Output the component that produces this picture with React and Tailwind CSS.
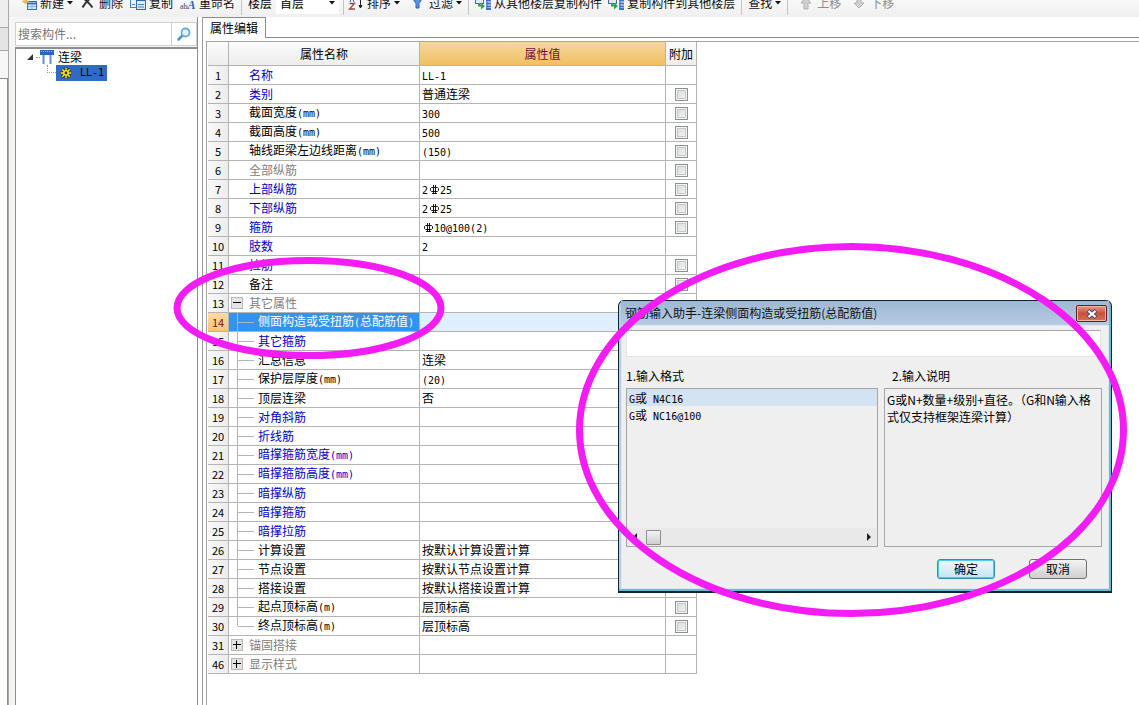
import { Fragment } from 'react'
import { clsx } from 'clsx'

const rows = [
  { no: 1, name: '名称', value: 'LL-1', tone: 'blue' },
  { no: 2, name: '类别', value: '普通连梁', tone: 'blue', check: true },
  { no: 3, name: '截面宽度(mm)', value: '300', check: true },
  { no: 4, name: '截面高度(mm)', value: '500', check: true },
  { no: 5, name: '轴线距梁左边线距离(mm)', value: '(150)', check: true },
  { no: 6, name: '全部纵筋', value: '', tone: 'gray', check: true },
  { no: 7, name: '上部纵筋', value: '2Φ25', tone: 'blue', check: true },
  { no: 8, name: '下部纵筋', value: '2Φ25', tone: 'blue', check: true },
  { no: 9, name: '箍筋', value: 'Φ10@100(2)', tone: 'blue', check: true },
  { no: 10, name: '肢数', value: '2', tone: 'blue' },
  { no: 11, name: '拉筋', value: '', tone: 'blue', check: true },
  { no: 12, name: '备注', value: '', check: true },
  { no: 13, name: '其它属性', value: '', tone: 'gray', node: 'open' },
  { no: 14, name: '侧面构造或受扭筋(总配筋值)', value: '', tone: 'white', node: 'child', check: true, selected: true },
  { no: 15, name: '其它箍筋', value: '', tone: 'blue', node: 'child' },
  { no: 16, name: '汇总信息', value: '连梁', node: 'child', check: true },
  { no: 17, name: '保护层厚度(mm)', value: '(20)', node: 'child', check: true },
  { no: 18, name: '顶层连梁', value: '否', node: 'child', check: true },
  { no: 19, name: '对角斜筋', value: '', tone: 'blue', node: 'child', check: true },
  { no: 20, name: '折线筋', value: '', tone: 'blue', node: 'child', check: true },
  { no: 21, name: '暗撑箍筋宽度(mm)', value: '', tone: 'blue', node: 'child', check: true },
  { no: 22, name: '暗撑箍筋高度(mm)', value: '', tone: 'blue', node: 'child', check: true },
  { no: 23, name: '暗撑纵筋', value: '', tone: 'blue', node: 'child', check: true },
  { no: 24, name: '暗撑箍筋', value: '', tone: 'blue', node: 'child', check: true },
  { no: 25, name: '暗撑拉筋', value: '', tone: 'blue', node: 'child', check: true },
  { no: 26, name: '计算设置', value: '按默认计算设置计算', node: 'child' },
  { no: 27, name: '节点设置', value: '按默认节点设置计算', node: 'child' },
  { no: 28, name: '搭接设置', value: '按默认搭接设置计算', node: 'child' },
  { no: 29, name: '起点顶标高(m)', value: '层顶标高', node: 'child', check: true },
  { no: 30, name: '终点顶标高(m)', value: '层顶标高', node: 'last', check: true },
  { no: 31, name: '锚固搭接', value: '', tone: 'gray', node: 'closed' },
  { no: 46, name: '显示样式', value: '', tone: 'gray', node: 'closed' },
]

const toneClass = {
  blue: 'text-[#0000c8]',
  gray: 'text-[#808080]',
  white: 'text-white',
}

// Latin runs use a half-width face, Φ is the rebar grade sign
function MixedText({ text }) {
  return text.split(/(Φ|[\x20-\x7e]+)/).map((part, i) => {
    if (part === 'Φ') return <RebarSign key={i} />
    if (/^[\x20-\x7e]+$/.test(part)) {
      return (
        <span key={i} className="font-['DejaVu_Sans_Mono',monospace] text-[10px] whitespace-pre">
          {part}
        </span>
      )
    }
    return <Fragment key={i}>{part}</Fragment>
  })
}

function TreeMark({ node }) {
  if (node === 'child' || node === 'last') {
    return (
      <span className="flex items-center self-stretch pr-1 pl-2" aria-hidden="true">
        <span
          className={clsx(
            'w-px bg-[#b4b4b4]',
            node === 'last' ? 'h-[9px] self-start' : 'self-stretch',
          )}
        />
        <span className="h-px w-4 bg-[#b4b4b4]" />
      </span>
    )
  }
  if (node) {
    const open = node === 'open'
    return (
      <button
        type="button"
        aria-label={open ? '折叠' : '展开'}
        className="mr-1.5 ml-0.5 flex size-3 items-center justify-center border border-[#b8b8b8] bg-[#e4e4e4] text-black"
      >
        <svg viewBox="0 0 8 8" className="size-2 shrink-0" aria-hidden="true">
          <rect x="0" y="3" width="8" height="1" fill="currentColor" />
          {!open && <rect x="3" y="0" width="1" height="8" fill="currentColor" />}
        </svg>
      </button>
    )
  }
  return <span className="w-5" />
}

function PropertyRow({ row }) {
  return (
    <tr className="h-[19px]">
      <th
        scope="row"
        className={clsx(
          'border-r border-b border-[#b4b4b4] p-0 text-center text-[11px] leading-[18px] font-normal',
          row.selected
            ? 'bg-linear-to-b from-[#fbdba3] to-[#f8c377] text-[#7a1010]'
            : 'bg-linear-to-r from-[#f9f9f9] to-[#ececec] text-black',
        )}
      >
        {row.no}
      </th>
      <td className={clsx('border-r border-b border-[#b4b4b4] p-0', row.selected && 'bg-[#3393ee]')}>
        <div className={clsx('flex h-[18px] items-center', toneClass[row.tone])}>
          <TreeMark node={row.node} />
          <span className="leading-[18px] whitespace-nowrap">
            <MixedText text={row.name} />
          </span>
        </div>
      </td>
      <td className={clsx('border-r border-b border-[#b4b4b4] p-0', row.selected && 'bg-[#e0efff]')}>
        <div className="h-[18px] pl-0.5 leading-[18px] whitespace-nowrap">
          <MixedText text={row.value} />
        </div>
      </td>
      <td className="border-r border-b border-[#b4b4b4] p-0">
        <div className="flex h-[18px] items-center justify-center">
          {row.check && (
            <input
              type="checkbox"
              aria-label={`附加 ${row.name}`}
              className="size-[13px] appearance-none border border-[#8e8f8f] bg-linear-to-br from-[#d4d6d9] to-[#f8f8f8] shadow-[inset_0_0_0_1px_#f4f4f4,inset_0_0_0_2px_#c4c7ca]"
            />
          )}
        </div>
      </td>
    </tr>
  )
}

function ToolButton({ icon, label, caret, disabled }) {
  return (
    <button
      type="button"
      disabled={disabled}
      className={clsx(
        'flex shrink-0 items-center gap-[3px] whitespace-nowrap',
        disabled ? 'text-[#8c8c8c]' : 'text-[#111111]',
      )}
    >
      {icon}
      {label}
      {caret && <Caret />}
    </button>
  )
}

function Separator({ wide }) {
  return <span className={clsx('h-6 w-px shrink-0 bg-[#c4c4c4]', wide ? 'mx-1.5' : 'mx-1')} />
}

function Toolbar() {
  return (
    <header className="flex h-[17px] flex-col justify-end overflow-hidden bg-linear-to-b from-[#f8f8f8] to-[#efefef]">
      <div className="flex h-7 shrink-0 items-center pl-3">
        <div className="flex gap-[7px]">
          <ToolButton icon={<NewIcon />} label="新建" caret />
          <ToolButton icon={<DeleteIcon />} label="删除" />
          <ToolButton icon={<CopyIcon />} label="复制" />
          <ToolButton icon={<RenameIcon />} label="重命名" />
        </div>
        <Separator wide />
        <label htmlFor="floor" className="mr-1 shrink-0">
          楼层
        </label>
        <div className="flex h-[22px] w-[63px] shrink-0 items-center bg-white pr-1">
          <select id="floor" className="min-w-0 flex-1 appearance-none bg-transparent pl-1 text-black">
            <option>首层</option>
          </select>
          <Caret />
        </div>
        <Separator />
        <div className="flex gap-2.5">
          <ToolButton icon={<SortIcon />} label="排序" caret />
          <ToolButton icon={<FilterIcon />} label="过滤" caret />
        </div>
        <Separator wide />
        <div className="flex gap-1.5">
          <ToolButton icon={<FloorCopyIcon />} label="从其他楼层复制构件" />
          <ToolButton icon={<FloorCopyIcon />} label="复制构件到其他楼层" />
        </div>
        <Separator wide />
        <ToolButton label="查找" caret />
        <Separator wide />
        <div className="flex gap-2.5 pl-1">
          <ToolButton icon={<ArrowIcon />} label="上移" disabled />
          <ToolButton icon={<ArrowIcon down />} label="下移" disabled />
        </div>
      </div>
    </header>
  )
}

function ComponentTree() {
  return (
    <aside className="ml-1.5 flex w-[183px] shrink-0 flex-col border-r border-[#8c8c94] pt-[5px]">
      <form className="flex h-[24px] border border-[#cfcfcf] bg-white">
        <input
          type="text"
          aria-label="搜索构件"
          placeholder="搜索构件..."
          className="min-w-0 flex-1 border-r border-[#cfcfcf] pl-0.5 placeholder:text-[#777777]"
        />
        <button type="button" aria-label="搜索" className="flex w-6 items-center justify-center">
          <SearchIcon />
        </button>
      </form>
      <div className="mt-px flex-1 border-t-2 border-l border-[#8c8c94] bg-white">
        <ul>
          <li>
            <div className="flex h-4 items-center pl-2.5">
              <svg viewBox="0 0 8 8" className="size-2" aria-hidden="true">
                <path d="M7 1v6H1z" fill="#333333" />
              </svg>
              <span className="ml-0.5 w-1 border-t border-dotted border-[#999999]" />
              <BeamIcon />
              <span className="ml-1 leading-4">连梁</span>
            </div>
            <ul>
              <li className="flex h-4 items-center pl-[31px]">
                <span className="h-2 w-[9px] self-start border-b border-l border-dotted border-[#999999]" />
                <a href="#ll-1" className="flex h-4 w-[51px] items-center gap-1 bg-[#316ac5] pl-1 text-black">
                  <GearIcon />
                  <MixedText text="LL-1" />
                </a>
              </li>
            </ul>
          </li>
        </ul>
      </div>
    </aside>
  )
}

function PropertyEditor() {
  return (
    <main className="ml-1 flex min-w-0 flex-1 flex-col border-l border-[#9a9aa2]">
      <div className="flex h-[21px]" role="tablist">
        <button
          type="button"
          role="tab"
          aria-selected="true"
          className="w-[63px] border-t border-r border-[#8c8c94] bg-white"
        >
          属性编辑
        </button>
        <div className="flex-1 border-b border-[#8c8c94]" />
      </div>
      <div className="mt-[3px] ml-[3px] flex-1 border-t border-l border-[#a6a6a6] bg-white">
        <table className="ml-px w-[489px] table-fixed border-separate border-spacing-0">
          <colgroup>
            <col className="w-[21px]" />
            <col className="w-[191px]" />
            <col className="w-[246px]" />
            <col className="w-[31px]" />
          </colgroup>
          <thead>
            <tr className="h-6">
              <th className="border-r border-b border-[#b4b4b4] bg-linear-to-b from-[#fbfbfb] to-[#ededed] p-0" />
              <th className="border-r border-b border-[#b4b4b4] bg-linear-to-b from-[#fbfbfb] to-[#ededed] p-0 font-normal">
                属性名称
              </th>
              <th className="border-r border-b border-[#b4b4b4] bg-linear-to-b from-[#f7d79b] to-[#f0bf62] p-0 font-normal text-[#70103c]">
                属性值
              </th>
              <th className="border-r border-b border-[#b4b4b4] bg-linear-to-b from-[#fbfbfb] to-[#ededed] p-0 font-normal">
                附加
              </th>
            </tr>
          </thead>
          <tbody>
            {rows.map((row) => (
              <PropertyRow key={row.no} row={row} />
            ))}
          </tbody>
        </table>
      </div>
    </main>
  )
}

function InputHelperDialog() {
  return (
    <section
      role="dialog"
      aria-labelledby="helper-title"
      className="absolute top-[300px] left-[618px] w-[494px] rounded-t-md border border-b-2 border-[#0d2433] bg-[#b7d0e8] px-0.5 pb-0.5 shadow-[inset_-2px_-2px_0_#6fb8d2]"
    >
      <header className="flex h-6 items-start justify-between bg-linear-to-b from-[#9fb8d2] to-[#b4cbe3] pr-0.5 pl-1">
        <h2 id="helper-title" className="text-xs leading-6 text-[#111111]">
          钢筋输入助手-连梁侧面构造或受扭筋(总配筋值)
        </h2>
        <button
          type="button"
          aria-label="关闭"
          className="mt-1 flex h-[17px] w-[31px] items-center justify-center rounded-[2px] border border-[#5b2020] bg-linear-to-b from-[#e39a8b] via-[#c8503c] to-[#d4705a] shadow-[inset_0_0_0_1px_#eeb8a8]"
        >
          <svg viewBox="0 0 12 10" className="h-2.5 w-3" aria-hidden="true">
            <path d="M2 1.5l8 7M10 1.5l-8 7" stroke="#4a5068" strokeWidth="4" />
            <path d="M2.5 2l7 6M9.500 2l-7 6" stroke="#ffffff" strokeWidth="2.200" />
          </svg>
        </button>
      </header>
      <div className="border border-[#dfe8f0] bg-[#efefef] px-1 pt-1">
        <input
          type="text"
          aria-label="钢筋输入"
          className="block h-[27px] w-[475px] border border-[#e3e3e3] border-t-[#a9a9a9] bg-white px-1"
        />
        <div className="mt-[9px] flex gap-1.5">
          <div className="w-[252px]">
            <h3 className="leading-5">1.输入格式</h3>
            <div className="mt-0.5 flex h-[159px] flex-col border border-[#a6a6a6]">
              <ul className="flex-1">
                <li className="h-[17px] bg-[#d3e3f3] pl-0.5 leading-[17px]">
                  <MixedText text="G或 N4C16" />
                </li>
                <li className="h-[17px] pl-0.5 leading-[17px]">
                  <MixedText text="G或 NC16@100" />
                </li>
              </ul>
              <div className="flex h-[18px] items-center bg-[#e9e9e9] px-1">
                <svg viewBox="0 0 8 8" className="size-2" aria-hidden="true">
                  <path d="M6 0v8L2 4z" fill="#222222" />
                </svg>
                <span className="ml-[7px] size-[15px] rounded-[1px] border border-[#8e8e8e] bg-linear-to-b from-[#f3f3f3] to-[#cfcfcf]" />
                <svg viewBox="0 0 8 8" className="ml-auto size-2" aria-hidden="true">
                  <path d="M2 0v8l4-4z" fill="#222222" />
                </svg>
              </div>
            </div>
          </div>
          <div className="w-[218px]">
            <h3 className="pl-2 leading-5">2.输入说明</h3>
            <p className="mt-0.5 h-[159px] border border-[#a6a6a6] py-0.5 pr-1 pl-0.5 leading-[17px]">
              G或N+数量+级别+直径。（G和N输入格式仅支持框架连梁计算）
            </p>
          </div>
        </div>
        <div className="flex justify-end gap-[34px] pt-3 pr-[17px] pb-[9px]">
          <button
            type="button"
            className="h-5 w-[58px] rounded-[3px] border border-[#2c8fb5] bg-linear-to-b from-[#f2f8fb] to-[#c5e3f1] leading-[18px] shadow-[inset_0_0_0_1px_#48cdf4]"
          >
            确定
          </button>
          <button
            type="button"
            className="h-5 w-[58px] rounded-[3px] border border-[#707070] bg-linear-to-b from-[#f4f4f4] to-[#cfcfcf] leading-[18px]"
          >
            取消
          </button>
        </div>
      </div>
    </section>
  )
}

export default function App() {
  return (
    <div className="relative flex min-h-screen overflow-hidden bg-white font-['Noto_Sans_CJK_SC',sans-serif] text-xs text-black">
      <div className="flex w-[9px] shrink-0 flex-col border-r border-[#a8a8a8] bg-[#eeeeee]">
        <div className="h-7 border-b border-[#a8a8a8]" />
        <div className="h-[23px] border-b border-[#a8a8a8] bg-[#e4e4e4]" />
        <div className="h-[27px] bg-[#f7f7f7]" />
        <div className="flex-1 border-t border-r border-[#8c8c94] bg-white" />
      </div>
      <div className="flex min-w-0 flex-1 flex-col">
        <Toolbar />
        <div className="flex flex-1">
          <div className="flex shrink-0 bg-[#f5f5f5]">
            <ComponentTree />
          </div>
          <PropertyEditor />
        </div>
      </div>
      <InputHelperDialog />
      <svg
        viewBox="0 0 1139 705"
        className="pointer-events-none absolute top-0 left-0 h-[705px] w-[1139px]"
        fill="none"
        stroke="#f41cf4"
        strokeWidth="7"
        aria-hidden="true"
      >
        <ellipse cx="309" cy="308" rx="132" ry="47.500" />
        <ellipse cx="851.500" cy="430" rx="272" ry="183.500" />
      </svg>
    </div>
  )
}

function RebarSign() {
  return (
    <svg viewBox="0 0 12 10" className="inline-block h-2.5 w-3 align-[-1px]" aria-label="Φ">
      <path
        d="M3.500 2.500h6l1 1v2l-1 1h-6l-1-1v-2zM5.500 0v9M7.500 0v9M4 8.500h5"
        fill="none"
        stroke="currentColor"
        strokeWidth=".9"
      />
    </svg>
  )
}

function Caret() {
  return (
    <svg viewBox="0 0 6 4" className="h-1 w-1.5 shrink-0" aria-hidden="true">
      <path d="M0 0h6L3 3.500z" fill="#111111" />
    </svg>
  )
}

function NewIcon() {
  return (
    <svg viewBox="0 0 16 16" className="size-4" aria-hidden="true">
      <rect x="6.500" y="6.500" width="9" height="8" fill="#dcebfa" stroke="#3c6ea8" />
      <path d="M7 8.500h8" stroke="#3c74b8" strokeWidth="2" />
      <path d="M7 11.500h8M11 9v5" stroke="#8fb3dc" />
      <path d="M4.500 3v6M1.500 6.500h6" stroke="#e7b93c" strokeWidth="2" />
    </svg>
  )
}

function DeleteIcon() {
  return (
    <svg viewBox="0 0 16 16" className="size-4" aria-hidden="true">
      <path d="M3 3c4 3 7 6 9.500 9.500M12 2C8 5 5 8 2.500 12.500" fill="none" stroke="#333333" strokeWidth="2" />
    </svg>
  )
}

function CopyIcon() {
  return (
    <svg viewBox="0 0 16 16" className="size-4" aria-hidden="true">
      <rect x=".5" y="3.500" width="8" height="9" fill="#eaf3fc" stroke="#4a7fc0" />
      <rect x="6.500" y="5.500" width="9" height="9" fill="#dcebfa" stroke="#3367ad" />
      <path d="M2 9.500h3M8 9.500h6M8 12h6" stroke="#4a7fc0" />
    </svg>
  )
}

function RenameIcon() {
  return (
    <svg viewBox="0 0 16 16" className="size-4" aria-hidden="true">
      <text x="0" y="14" fontSize="8" fontFamily="Liberation Serif" fill="#444444">
        ab
        <tspan fontSize="12" fontWeight="bold" fontStyle="italic" fill="#2a64b4">
          A
        </tspan>
      </text>
    </svg>
  )
}

function SortIcon() {
  return (
    <svg viewBox="0 0 16 16" className="size-4" aria-hidden="true">
      <path d="M1.500 8.500h5l-5 5.500h5.500" fill="none" stroke="#9a4a4a" strokeWidth="1.300" />
      <path d="M2 7l2-5 2 5" fill="none" stroke="#3c5cb0" />
      <path d="M12.500 2v9M11 10.500h3L12.500 13z" fill="#222222" stroke="#222222" />
    </svg>
  )
}

function FilterIcon() {
  return (
    <svg viewBox="0 0 16 16" className="size-4" aria-hidden="true">
      <path d="M3 4h9L9 8.500V13H6V8.500z" fill="#5b94e6" stroke="#2c5fb8" />
    </svg>
  )
}

function FloorCopyIcon() {
  return (
    <svg viewBox="0 0 16 16" className="size-4" aria-hidden="true">
      <rect x=".5" y="3.500" width="8" height="5" fill="#dfe9f6" stroke="#4c6a96" />
      <path d="M12 2v13" stroke="#3f74c4" />
      <path d="M11 5.500h5M11 8.500h5M11 11.500h5M11 14h5" stroke="#3f74c4" strokeWidth="2" />
      <path d="M3 8v3.500h3V14.500l4-3.500-4-3V9.500H5V8z" fill="#2fa348" />
    </svg>
  )
}

function ArrowIcon({ down }) {
  return (
    <svg viewBox="0 0 16 16" className="size-4" aria-hidden="true">
      <path
        d={down ? 'M6 2h4v6h3l-5 5-5-5h3z' : 'M8 2l5 6h-3v6H6V8H3z'}
        fill="#d0d0d0"
        stroke="#b0b0b0"
      />
    </svg>
  )
}

function SearchIcon() {
  return (
    <svg viewBox="0 0 16 16" className="size-4" aria-hidden="true">
      <path d="M6.500 9.500L2.500 13.500" stroke="#4f94c4" strokeWidth="2.500" strokeLinecap="round" />
      <circle cx="9.500" cy="6.500" r="4" fill="#e4f3fc" stroke="#68abd8" strokeWidth="1.800" />
    </svg>
  )
}

function BeamIcon() {
  return (
    <svg viewBox="0 0 14 14" className="size-3.5" aria-hidden="true">
      <rect x="0" y="0" width="14" height="5" fill="#2d62bd" />
      <path d="M1 1.500h12" stroke="#8fb4ea" strokeDasharray="1 1" />
      <path d="M3.500 5v9M10.500 5v9" stroke="#5f8fd8" strokeWidth="2" />
    </svg>
  )
}

function GearIcon() {
  return (
    <svg viewBox="0 0 12 12" className="mr-1 size-3" aria-hidden="true">
      <path d="M6 0v12M0 6h12M2 2l8 8M10 2l-8 8" stroke="#222200" strokeWidth="2.500" />
      <path d="M6 .5v11M.5 6h11M2.200 2.200l7.600 7.600M9.800 2.200l-7.600 7.600" stroke="#ffee22" strokeWidth="1.400" />
      <circle cx="6" cy="6" r="2.800" fill="#ffee22" />
      <circle cx="6" cy="6" r="1.400" fill="#333300" />
    </svg>
  )
}
